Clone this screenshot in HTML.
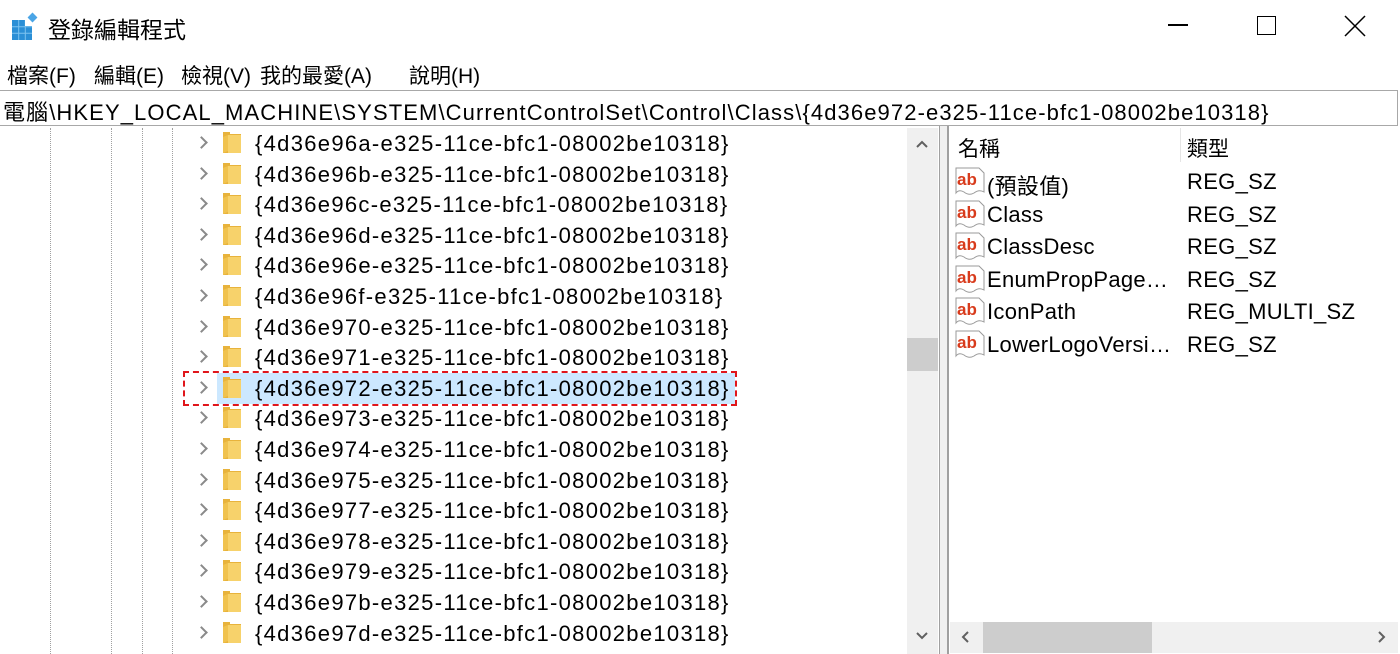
<!DOCTYPE html>
<html><head><meta charset="utf-8">
<style>
*{margin:0;padding:0;box-sizing:border-box}
body{width:1400px;height:654px;background:#fff;position:relative;overflow:hidden;font-family:"Liberation Sans","Noto Sans CJK TC",sans-serif;color:#000}
.a{position:absolute;white-space:nowrap}
.t{font-size:22px;line-height:24px;letter-spacing:1.3px}
.vd{position:absolute;top:128px;height:526px;border-left:1px dotted #a0a0a0}
.chev{position:absolute;width:9px;height:9px;border-right:2px solid #8a8a8a;border-top:2px solid #8a8a8a;transform:rotate(45deg)}
.m{position:absolute;top:60px;font-size:21px}
</style></head><body>
<svg class="a" style="left:11px;top:11px" width="30" height="30" viewBox="0 0 30 30">
<rect x="1" y="9" width="20" height="20" fill="#2b8fd6"/>
<g stroke="#7cc3f0" stroke-width="1"><line x1="7.7" y1="9" x2="7.7" y2="29"/><line x1="14.3" y1="9" x2="14.3" y2="29"/><line x1="1" y1="15.7" x2="21" y2="15.7"/><line x1="1" y1="22.3" x2="21" y2="22.3"/></g>
<rect x="14" y="1" width="14" height="14" fill="#fff"/>
<rect x="18" y="3" width="7" height="7" fill="#4aa5e6" transform="rotate(45 21.5 6.5)"/>
</svg>
<div class="a" style="left:48px;top:11px;font-size:23px">登錄編輯程式</div>
<div class="a" style="left:1168px;top:24px;width:20px;height:2px;background:#000"></div>
<div class="a" style="left:1257px;top:16px;width:19px;height:19px;border:1.5px solid #000"></div>
<svg class="a" style="left:1344px;top:15px" width="22" height="22"><path d="M1 1L21 21M21 1L1 21" stroke="#000" stroke-width="1.5"/></svg>
<div class="m" style="left:7px">檔案(F)</div>
<div class="m" style="left:94px">編輯(E)</div>
<div class="m" style="left:181px">檢視(V)</div>
<div class="m" style="left:260px">我的最愛(A)</div>
<div class="m" style="left:409px">說明(H)</div>
<div class="a" style="left:0;top:90px;width:1398px;height:36px;border:1px solid #a8a8a8;border-left:none"></div>
<div class="a" style="left:3px;top:95px;font-size:22px;letter-spacing:1.1px">電腦\HKEY_LOCAL_MACHINE\SYSTEM\CurrentControlSet\Control\Class\{4d36e972-e325-11ce-bfc1-08002be10318}</div>
<div class="vd" style="left:50px"></div><div class="vd" style="left:111px"></div><div class="vd" style="left:142px"></div><div class="vd" style="left:172px"></div>
<div class="a" style="left:217px;top:373px;width:518px;height:31px;background:#cce8ff"></div>
<div class="a" style="left:183px;top:371px;width:554px;height:35px;border:2px dashed #e0161b"></div>
<div id="tree"></div>
<div class="a" style="left:907px;top:128px;width:31px;height:526px;background:#f0f0f0"></div>
<div class="a" style="left:907px;top:338px;width:31px;height:33px;background:#cdcdcd"></div>
<svg class="a" style="left:916px;top:140px" width="12" height="8"><path d="M1 7L6 2L11 7" stroke="#606060" stroke-width="2" fill="none"/></svg>
<svg class="a" style="left:916px;top:632px" width="12" height="8"><path d="M1 1L6 6L11 1" stroke="#606060" stroke-width="2" fill="none"/></svg>
<div class="a" style="left:939px;top:126px;width:1px;height:528px;background:#a0a0a0"></div>
<div class="a" style="left:947px;top:126px;width:2px;height:528px;background:#a0a0a0"></div>
<div class="a" style="left:940px;top:126px;width:7px;height:528px;background:#f0f0f0"></div>
<div class="a" style="left:958px;top:133px;font-size:21px">名稱</div>
<div class="a" style="left:1187px;top:133px;font-size:21px">類型</div>
<div class="a" style="left:1180px;top:128px;width:1px;height:34px;background:#e5e5e5"></div>
<div id="vals"></div>
<div class="a" style="left:950px;top:622px;width:448px;height:31px;background:#f0f0f0"></div>
<div class="a" style="left:983px;top:622px;width:169px;height:31px;background:#cdcdcd"></div>
<svg class="a" style="left:961px;top:631px" width="8" height="12"><path d="M7 1L2 6L7 11" stroke="#606060" stroke-width="2" fill="none"/></svg>
<svg class="a" style="left:1378px;top:631px" width="8" height="12"><path d="M1 1L6 6L1 11" stroke="#606060" stroke-width="2" fill="none"/></svg>
<script>
var ids=["96a","96b","96c","96d","96e","96f","970","971","972","973","974","975","977","978","979","97b","97d"];
var h="";
ids.forEach(function(s,i){var c=143+i*30.6;
h+='<div class="chev" style="left:197px;top:'+(c-5)+'px"></div>';
h+='<svg class="a" style="left:222px;top:'+(c-12)+'px" width="20" height="24" viewBox="0 0 20 24"><path d="M1 1H8V3H19V22H1Z" fill="#e8b33c"/><path d="M6 4H19V22H6Z" fill="#f7d26b"/><path d="M1 22L6 20V4L1 6Z" fill="#f0c24e"/></svg>';
h+='<div class="a t" style="left:255px;top:'+(c-11)+'px">{4d36e'+s+'-e325-11ce-bfc1-08002be10318}</div>';});
document.getElementById("tree").innerHTML=h;
var v=[["(預設值)","REG_SZ"],["Class","REG_SZ"],["ClassDesc","REG_SZ"],["EnumPropPage…","REG_SZ"],["IconPath","REG_MULTI_SZ"],["LowerLogoVersi…","REG_SZ"]];
h="";
v.forEach(function(r,i){var c=181+i*32.6;
h+='<svg class="a" style="left:954px;top:'+(c-15)+'px" width="32" height="30" viewBox="0 0 32 30"><path d="M2 2H25L30 7V26Q25 23 20 27Q15 30 10 26Q5 23 2 27Z" fill="#fff" stroke="#9a9a9a"/><text x="3" y="19" font-family="Liberation Sans" font-weight="bold" font-size="17" fill="#d83b1c">ab</text></svg>';
h+='<div class="a" style="left:987px;top:'+(c-12)+'px;font-size:22px;letter-spacing:0.3px">'+r[0]+'</div>';
h+='<div class="a" style="left:1187px;top:'+(c-12)+'px;font-size:22px;letter-spacing:0.3px">'+r[1]+'</div>';});
document.getElementById("vals").innerHTML=h;
</script>
</body></html>
